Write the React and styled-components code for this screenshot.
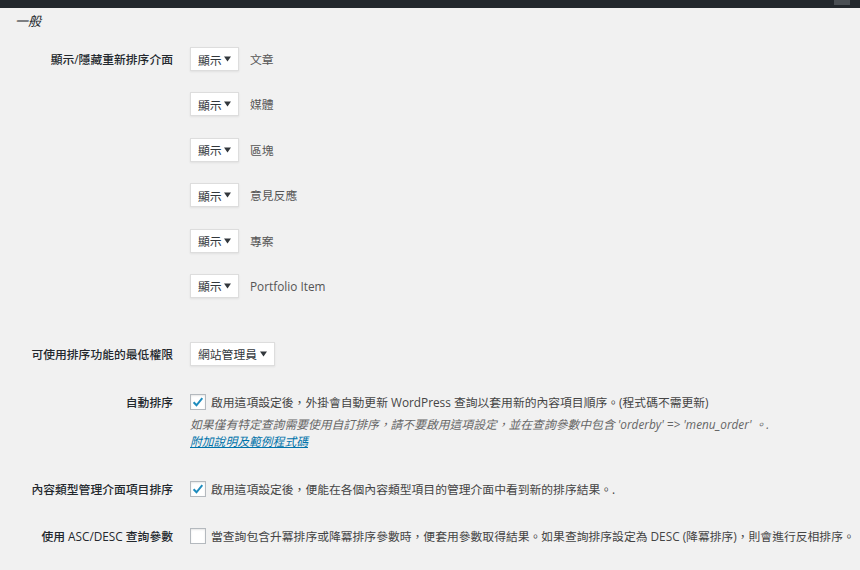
import React from "react";
import styled, { createGlobalStyle } from "styled-components";

const GlobalStyle = createGlobalStyle`
  html, body {
    margin: 0;
    padding: 0;
    background: #f1f1f1;
  }
  body {
    font-family: "Open Sans", "Noto Sans CJK TC", sans-serif;
    font-size: 11.8px;
    color: #444;
  }
`;

const POST_TYPES = ["文章", "媒體", "區塊", "意見反應", "專案", "Portfolio Item"];

const App = () => {
  return (
    <>
      <GlobalStyle />
      <Page>
        <AdminBar>
          <Avatar />
        </AdminBar>
        <SectionTitle>一般</SectionTitle>
        <FormTable>
          <Row $top={16}>
            <Label>顯示/隱藏重新排序介面</Label>
            <TypeList>
              {POST_TYPES.map((name) => (
                <TypeItem key={name}>
                  <Select width={49}>顯示</Select>
                  <TypeName>{name}</TypeName>
                </TypeItem>
              ))}
            </TypeList>
          </Row>

          <Row $top={44}>
            <Label>可使用排序功能的最低權限</Label>
            <Field>
              <Select width={85}>網站管理員</Select>
            </Field>
          </Row>

          <Row $top={26}>
            <Label $short>自動排序</Label>
            <Field>
              <CheckLine>
                <Checkbox checked />
                <span>
                  啟用這項設定後，外掛會自動更新 WordPress
                  查詢以套用新的內容項目順序。(程式碼不需更新)
                </span>
              </CheckLine>
              <Description>
                如果僅有特定查詢需要使用自訂排序，請不要啟用這項設定，並在查詢參數中包含
                'orderby' =&gt; 'menu_order' 。.
                <br />
                <HelpLink href="#">附加說明及範例程式碼</HelpLink>
              </Description>
            </Field>
          </Row>

          <Row $top={28}>
            <Label $short>內容類型管理介面項目排序</Label>
            <Field>
              <CheckLine>
                <Checkbox checked />
                <span>啟用這項設定後，便能在各個內容類型項目的管理介面中看到新的排序結果。.</span>
              </CheckLine>
            </Field>
          </Row>

          <Row $top={27}>
            <Label $short>使用 ASC/DESC 查詢參數</Label>
            <Field>
              <CheckLine>
                <Checkbox />
                <span>
                  當查詢包含升冪排序或降冪排序參數時，便套用參數取得結果。如果查詢排序設定為 DESC
                  (降冪排序)，則會進行反相排序。
                </span>
              </CheckLine>
            </Field>
          </Row>
        </FormTable>
      </Page>
    </>
  );
};

const Select = ({ width, children }) => (
  <SelectBox style={{ width }}>
    <span>{children}</span>
    <svg width="7" height="6" viewBox="0 0 7 6">
      <path d="M0 0.5h7L3.5 5.5z" fill="#32373c" />
    </svg>
  </SelectBox>
);

const Checkbox = ({ checked }) => (
  <CheckBoxFrame>
    {checked && (
      <svg width="14" height="14" viewBox="0 0 14 14">
        <path
          d="M2.6 7.2l2.9 3.1L11.3 3.2"
          fill="none"
          stroke="#1e8cbe"
          strokeWidth="2"
        />
      </svg>
    )}
  </CheckBoxFrame>
);

export default App;

const Page = styled.div`
  width: 860px;
  height: 570px;
  overflow: hidden;
`;

const AdminBar = styled.div`
  height: 8px;
  background: #23282d;
  display: flex;
  justify-content: flex-end;
  padding-right: 10px;
`;

const Avatar = styled.div`
  width: 16px;
  height: 5px;
  background: #4a4f54;
`;

const SectionTitle = styled.h2`
  margin: 3px 0 0 15px;
  font-size: 13px;
  font-weight: 400;
  font-style: italic;
  line-height: 20px;
  color: #23282d;
`;

const FormTable = styled.div`
  display: flex;
  flex-direction: column;
`;

const Row = styled.div`
  display: grid;
  grid-template-columns: 173px 1fr;
  column-gap: 17px;
  align-items: start;
  margin-top: ${(props) => props.$top}px;
`;

const Label = styled.div`
  text-align: right;
  font-weight: 500;
  color: #23282d;
  line-height: ${(props) => (props.$short ? "20px" : "24px")};
  white-space: nowrap;
`;

const Field = styled.div`
  display: flex;
  flex-direction: column;
  white-space: nowrap;
`;

const TypeList = styled.div`
  display: flex;
  flex-direction: column;
  gap: 21.4px;
`;

const TypeItem = styled.div`
  display: flex;
  align-items: center;
  gap: 11px;
`;

const TypeName = styled.span`
  color: #555;
  line-height: 20px;
`;

const SelectBox = styled.div`
  box-sizing: border-box;
  height: 24px;
  display: flex;
  align-items: center;
  justify-content: space-between;
  padding: 0 7px 0 7px;
  background: #fff;
  border: 1px solid #ddd;
  box-shadow: 0 1px 2px rgba(0, 0, 0, 0.07);
  color: #32373c;
`;

const CheckLine = styled.label`
  display: flex;
  align-items: center;
  gap: 5px;
  line-height: 20px;
  color: #444;
`;

const CheckBoxFrame = styled.span`
  box-sizing: border-box;
  width: 16px;
  height: 16px;
  flex: none;
  display: flex;
  align-items: center;
  justify-content: center;
  background: #fff;
  border: 1px solid #b4b9be;
  box-shadow: inset 0 1px 2px rgba(0, 0, 0, 0.1);
`;

const Description = styled.p`
  margin: 4px 0 0;
  font-style: italic;
  color: #666;
  line-height: 17.5px;
`;

const HelpLink = styled.a`
  color: #0073aa;
  text-decoration: underline;
`;
